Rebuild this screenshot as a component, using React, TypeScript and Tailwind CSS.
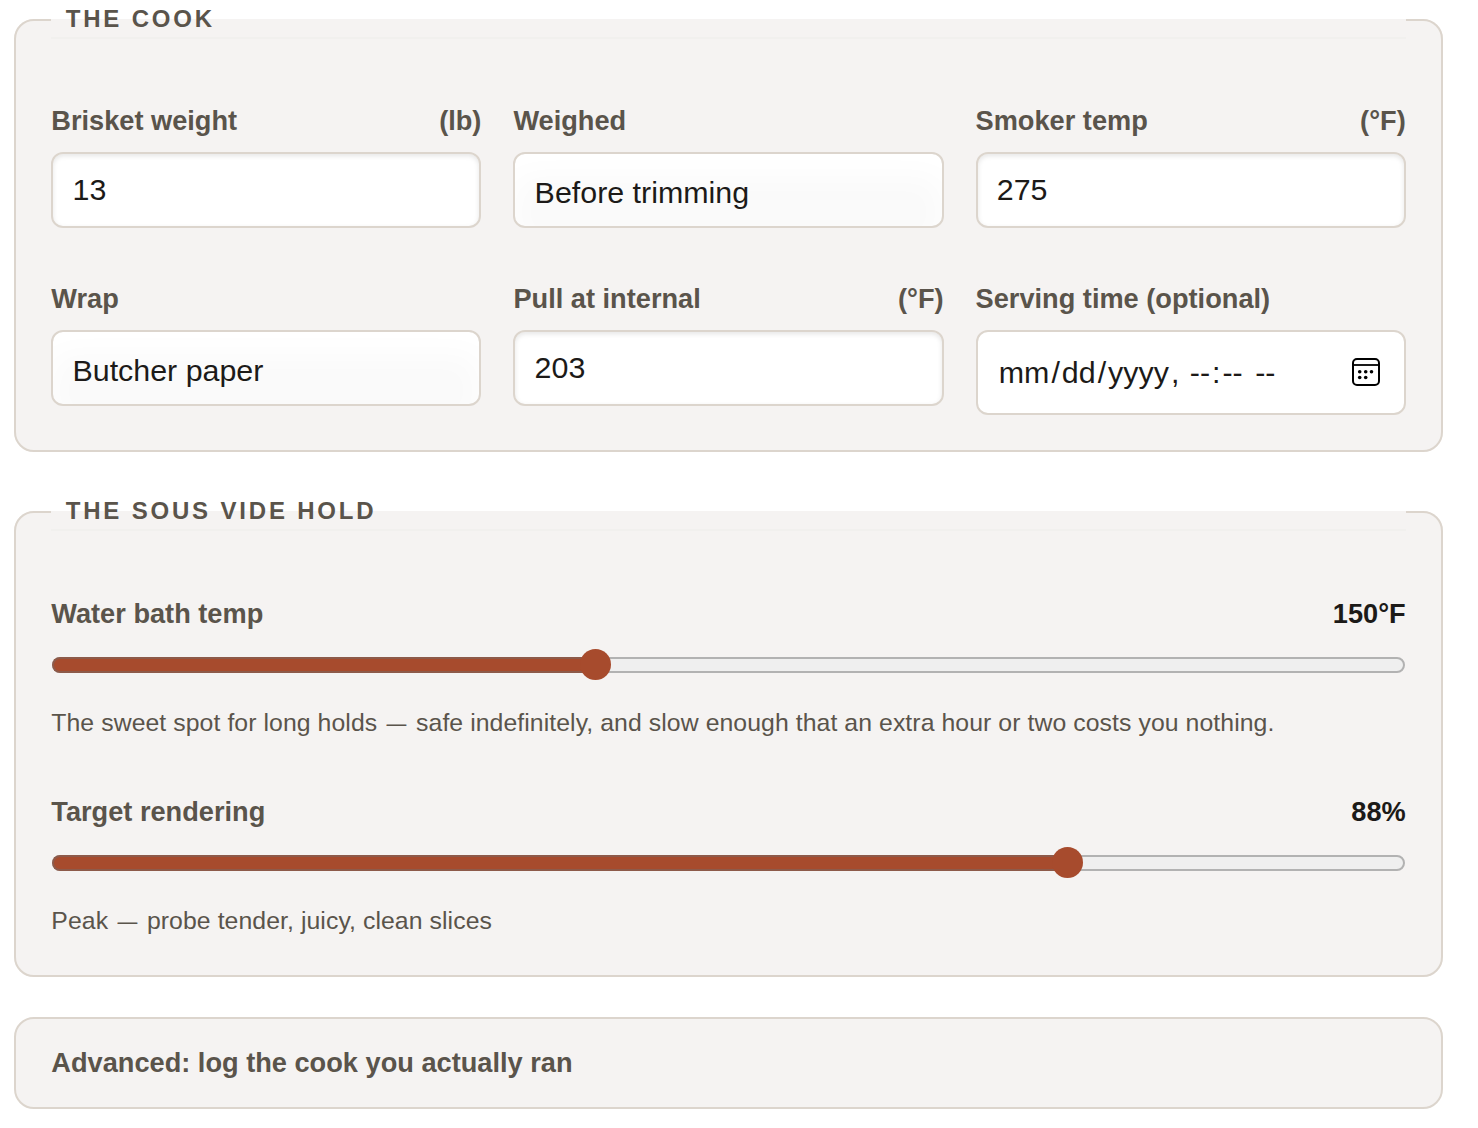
import type { ReactNode } from "react";

const control =
  "flex w-full items-center rounded-[12px] border-2 border-[#dcd5cd] px-[19.2px] text-[30.4px] text-[#1c1a18]";

function Card({ title, children }: { title: string; children: ReactNode }) {
  return (
    <fieldset className="min-w-0 rounded-[20px] border-2 border-[#dcd5cd] bg-[#f5f3f2] px-[35.3px] pb-[35px]">
      <legend className="w-full border-b-2 border-[#f1f0ee] pl-[14.4px] text-[24px] leading-[35.6px] font-bold tracking-[2.82px] text-[#5a544b] uppercase">
        {title}
      </legend>
      {children}
    </fieldset>
  );
}

function Field({
  label,
  unit,
  children,
}: {
  label: string;
  unit?: string;
  children: ReactNode;
}) {
  return (
    <div>
      <div className="mb-[15px] flex justify-between text-[27.2px] leading-8 font-bold text-[#5a544b]">
        <span>{label}</span>
        {unit && <span>({unit})</span>}
      </div>
      {children}
    </div>
  );
}

function NumberBox({ value }: { value: string }) {
  return (
    <div
      className={`${control} h-[76px] bg-white shadow-[inset_0_2px_5px_rgba(0,0,0,0.1)]`}>
      {value}
    </div>
  );
}

function SelectBox({ value }: { value: string }) {
  return (
    <div
      className={`${control} h-[76px] bg-[#fafafa] pt-[6px] shadow-[inset_0_22px_32px_#ffffff]`}>
      {value}
    </div>
  );
}

function CalendarIcon() {
  return (
    <svg width="28" height="28" viewBox="0 0 28 28" fill="none">
      <rect x="1" y="1" width="26" height="26" rx="4" stroke="#000" strokeWidth="2" />
      <path d="M1.5 7H26.5" stroke="#000" strokeWidth="1.8" />
      <g fill="#000">
        <circle cx="7.7" cy="13.7" r="1.8" />
        <circle cx="13.7" cy="13.7" r="1.8" />
        <circle cx="19.5" cy="13.7" r="1.8" />
        <circle cx="7.7" cy="19.5" r="1.8" />
        <circle cx="13.7" cy="19.5" r="1.8" />
      </g>
    </svg>
  );
}

function DateTimeBox() {
  return (
    <div className={`${control} h-[85px] justify-between bg-white pr-[24px]`}>
      <div className="flex whitespace-pre">
        <span className="px-0.5">mm</span>/<span className="px-0.5">dd</span>/
        <span className="px-0.5">yyyy</span>
        <span>, </span>
        <span className="px-0.5">--</span>:<span className="px-0.5">--</span>
        <span> </span>
        <span className="px-0.5">--</span>
      </div>
      <CalendarIcon />
    </div>
  );
}

function Dash() {
  return <span className="inline-block scale-x-80">—</span>;
}

function Slider({
  label,
  value,
  percent,
  children,
}: {
  label: string;
  value: string;
  percent: number;
  children: ReactNode;
}) {
  return (
    <div>
      <div className="flex justify-between text-[27.2px] leading-8 font-bold text-[#5a544b]">
        <span>{label}</span>
        <span className="text-[#1c1a18]">{value}</span>
      </div>
      <div className="relative mx-[0.7px] mt-[27px] h-4 rounded-full border-2 border-[#b2b2b2] bg-[#efefef]">
        <div
          className="absolute -top-0.5 -left-0.5 h-4 rounded-l-full border-y-2 border-l-2 border-[#8d5a4a] bg-[#a74b2d]"
          style={{ width: `${percent}%` }}
        />
        <div
          className="absolute -top-[9.5px] -ml-[17.4px] size-[31px] rounded-full bg-[#a74b2d]"
          style={{ left: `${percent}%` }}
        />
      </div>
      <p className="mt-[34px] text-[24.8px] leading-8 tracking-[0.07px] whitespace-nowrap text-[#5a544b]">
        {children}
      </p>
    </div>
  );
}

export default function App() {
  return (
    <main className="flex h-[1128px] flex-col gap-[41px] bg-white pt-px pr-[35px] pl-[14px] font-['Liberation_Sans',Arial,sans-serif]">
      <Card title="The cook">
        <div className="mt-[66.4px] grid grid-cols-3 items-start gap-x-8 gap-y-[55px]">
          <Field label="Brisket weight" unit="lb">
            <NumberBox value="13" />
          </Field>
          <Field label="Weighed">
            <SelectBox value="Before trimming" />
          </Field>
          <Field label="Smoker temp" unit="°F">
            <NumberBox value="275" />
          </Field>
          <Field label="Wrap">
            <SelectBox value="Butcher paper" />
          </Field>
          <Field label="Pull at internal" unit="°F">
            <NumberBox value="203" />
          </Field>
          <Field label="Serving time (optional)">
            <DateTimeBox />
          </Field>
        </div>
      </Card>

      <Card title="The sous vide hold">
        <div className="mt-[67.4px] flex flex-col gap-[57px] pb-[3px]">
          <Slider label="Water bath temp" value="150°F" percent={40.3}>
            The sweet spot for long holds <Dash /> safe indefinitely, and slow
            enough that an extra hour or two costs you nothing.
          </Slider>
          <Slider label="Target rendering" value="88%" percent={75.3}>
            Peak <Dash /> probe tender, juicy, clean slices
          </Slider>
        </div>
      </Card>

      <div className="-mt-px flex h-[92px] shrink-0 items-center rounded-[20px] border-2 border-[#dcd5cd] bg-[#f5f3f2] px-[35.3px] text-[27.2px] font-bold text-[#5a544b]">
        Advanced: log the cook you actually ran
      </div>
    </main>
  );
}
